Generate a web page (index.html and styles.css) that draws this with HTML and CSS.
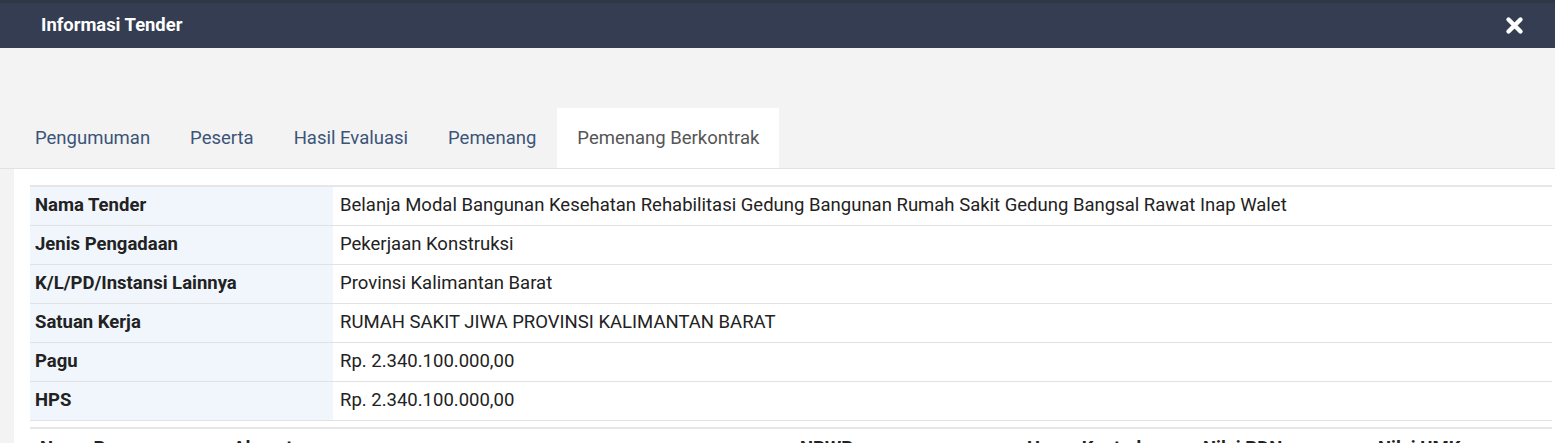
FILE: index.html
```html
<!DOCTYPE html>
<html lang="id">
<head>
<meta charset="utf-8">
<title>Informasi Tender</title>
<link rel="stylesheet" href="styles.css">
</head>
<body>
<div class="modal">
  <header class="modal-header">
    <h1 class="modal-title">Informasi Tender</h1>
    <button class="close" aria-label="Tutup">
      <svg width="19" height="19" viewBox="0 0 19 19"><path d="M3.5 3.5 L15.5 15.5 M15.5 3.5 L3.5 15.5" stroke="#fff" stroke-width="4.4" stroke-linecap="round"/></svg>
    </button>
  </header>
  <div class="modal-body">
    <ul class="tabs">
      <li class="tab">Pengumuman</li>
      <li class="tab">Peserta</li>
      <li class="tab">Hasil Evaluasi</li>
      <li class="tab">Pemenang</li>
      <li class="tab active">Pemenang Berkontrak</li>
    </ul>
    <div class="panel">
      <table class="info">
        <tr><th>Nama Tender</th><td>Belanja Modal Bangunan Kesehatan Rehabilitasi Gedung Bangunan Rumah Sakit Gedung Bangsal Rawat Inap Walet</td></tr>
        <tr><th>Jenis Pengadaan</th><td>Pekerjaan Konstruksi</td></tr>
        <tr><th>K/L/PD/Instansi Lainnya</th><td>Provinsi Kalimantan Barat</td></tr>
        <tr><th>Satuan Kerja</th><td>RUMAH SAKIT JIWA PROVINSI KALIMANTAN BARAT</td></tr>
        <tr><th>Pagu</th><td>Rp. 2.340.100.000,00</td></tr>
        <tr><th>HPS</th><td>Rp. 2.340.100.000,00</td></tr>
      </table>
      <table class="winners">
        <tr>
          <th class="c1">Nama Pemenang</th>
          <th class="c2">Alamat</th>
          <th class="c3">NPWP</th>
          <th class="c4">Harga Kontrak</th>
          <th class="c5">Nilai PDN</th>
          <th class="c6">Nilai UMK</th>
        </tr>
      </table>
    </div>
  </div>
</div>
</body>
</html>
```
FILE: styles.css
```css
* { box-sizing: border-box; }
html, body { margin: 0; padding: 0; }
body {
  font-family: Roboto, "Liberation Sans", Arial, sans-serif;
  background: #f3f3f3;
  color: #222;
  overflow: hidden;
  height: 443px;
}
.modal-header {
  height: 48px;
  background: #343d52;
  border-top: 3px solid #2f3645;
  display: flex;
  align-items: center;
  justify-content: space-between;
  padding: 0 31px 0 41px;
}
.modal-title {
  margin: 0;
  font-size: 18.4px;
  font-weight: 700;
  color: #fff;
  line-height: 22px;
  padding-bottom: 2px;
}
.close {
  background: none;
  border: 0;
  padding: 0;
  width: 19px;
  height: 19px;
  display: flex;
}
.modal-body {
  padding-top: 60px;
}
.tabs {
  list-style: none;
  margin: 0;
  padding: 0 0 0 15px;
  display: flex;
  border-bottom: 1px solid #e2e2e2;
}
.tab {
  height: 60px;
  padding: 0 20px;
  display: flex;
  align-items: center;
  font-size: 18.5px;
  color: #3c5478;
  padding-bottom: 1px;
}
.tab.active {
  background: #fff;
  color: #555;
  margin-left: 1px;
  margin-bottom: -1px;
}
.panel {
  margin-left: 14px;
  background: #fff;
  padding: 16px 3px 0 16px;
  height: 300px;
}
table {
  border-collapse: collapse;
  width: 100%;
}
.info {
  border-top: 2px solid #e6e6e6;
}
.info th, .info td {
  height: 39px;
  border-bottom: 1px solid #e2e2e2;
  font-size: 18.5px;
  text-align: left;
  vertical-align: middle;
  padding: 0 6px 1px 5px;
}
.info th {
  width: 303px;
  background: #f0f6fc;
  font-weight: 700;
  color: #222;
}
.info td {
  font-weight: 400;
  color: #222;
  padding-left: 7px;
}
.winners {
  margin-top: 6px;
  border-top: 2px solid #e6e6e6;
}
.winners th {
  font-size: 18.5px;
  font-weight: 700;
  text-align: left;
  padding: 8px 10px;
  color: #222;
  white-space: nowrap;
}
.winners .c1 { width: 193px; }
.winners .c2 { width: 567px; }
.winners .c3 { width: 227px; }
.winners .c4 { width: 176px; }
.winners .c5 { width: 175px; }
```
